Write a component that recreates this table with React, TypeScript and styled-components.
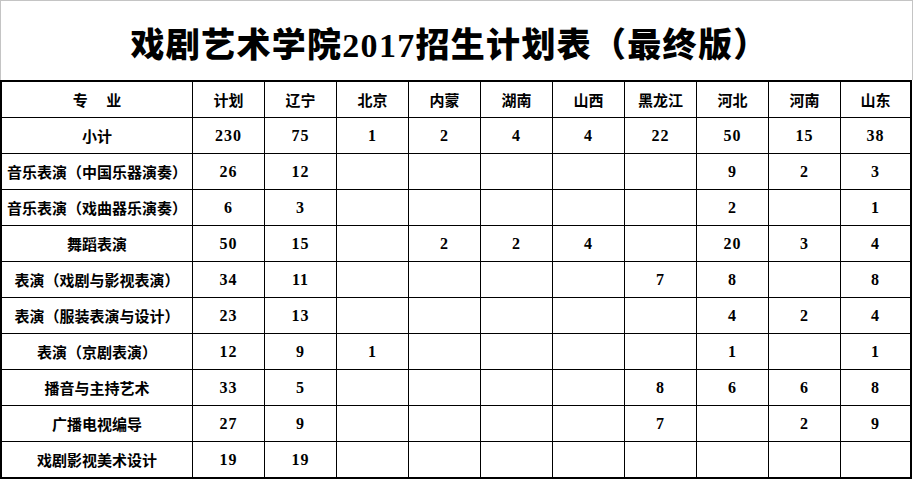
import React from "react";
import styled, { createGlobalStyle } from "styled-components";

const Global = createGlobalStyle`
  html, body { margin: 0; padding: 0; background: #ffffff; }
  body { font-family: "Noto Sans CJK SC", sans-serif; color: #000; }
`;

const Sheet = styled.div`
  width: 913px;
  display: flex;
  flex-direction: column;
`;

const TitleBar = styled.div`
  box-sizing: border-box;
  height: 80px;
  border: 1px solid #c4c4c4;
  border-bottom: none;
  display: flex;
  align-items: center;
  justify-content: center;
  padding-top: 10px;
  padding-right: 14px;
`;

const Title = styled.h1`
  margin: 0;
  font-family: "Liberation Serif", "Noto Sans CJK SC", serif;
  font-size: 34px;
  font-weight: 900;
  line-height: 1;
  letter-spacing: 1.3px;
`;

const Grid = styled.div`
  width: 912px;
  box-sizing: border-box;
  border: 2px solid #000;
  background: #000;
  display: grid;
  grid-template-columns: 190px repeat(9, 71px) 69px;
  grid-auto-rows: 35px;
  gap: 1px;
`;

const Cell = styled.div<{ $num?: boolean }>`
  background: #fff;
  display: flex;
  align-items: center;
  justify-content: center;
  font-family: ${(p) =>
    p.$num ? `"Liberation Serif", "Noto Sans CJK SC", serif` : `"Noto Sans CJK SC", sans-serif`};
  font-size: ${(p) => (p.$num ? "16px" : "15px")};
  font-weight: 700;
  letter-spacing: ${(p) => (p.$num ? "1px" : "0")};
  white-space: pre;
  line-height: 1;
`;

const headers = ["专　 业", "计划", "辽宁", "北京", "内蒙", "湖南", "山西", "黑龙江", "河北", "河南", "山东"];

const rows: string[][] = [
  ["小计", "230", "75", "1", "2", "4", "4", "22", "50", "15", "38"],
  ["音乐表演（中国乐器演奏）", "26", "12", "", "", "", "", "", "9", "2", "3"],
  ["音乐表演（戏曲器乐演奏）", "6", "3", "", "", "", "", "", "2", "", "1"],
  ["舞蹈表演", "50", "15", "", "2", "2", "4", "", "20", "3", "4"],
  ["表演（戏剧与影视表演）", "34", "11", "", "", "", "", "7", "8", "", "8"],
  ["表演（服装表演与设计）", "23", "13", "", "", "", "", "", "4", "2", "4"],
  ["表演（京剧表演）", "12", "9", "1", "", "", "", "", "1", "", "1"],
  ["播音与主持艺术", "33", "5", "", "", "", "", "8", "6", "6", "8"],
  ["广播电视编导", "27", "9", "", "", "", "", "7", "", "2", "9"],
  ["戏剧影视美术设计", "19", "19", "", "", "", "", "", "", "", ""],
];

export default function App() {
  return (
    <>
      <Global />
      <Sheet>
        <TitleBar>
          <Title>戏剧艺术学院2017招生计划表（最终版）</Title>
        </TitleBar>
        <Grid>
          {headers.map((h, i) => (
            <Cell key={`h${i}`}>{h}</Cell>
          ))}
          {rows.map((r, ri) =>
            r.map((v, ci) => (
              <Cell key={`${ri}-${ci}`} $num={ci > 0}>
                {v}
              </Cell>
            ))
          )}
        </Grid>
      </Sheet>
    </>
  );
}
